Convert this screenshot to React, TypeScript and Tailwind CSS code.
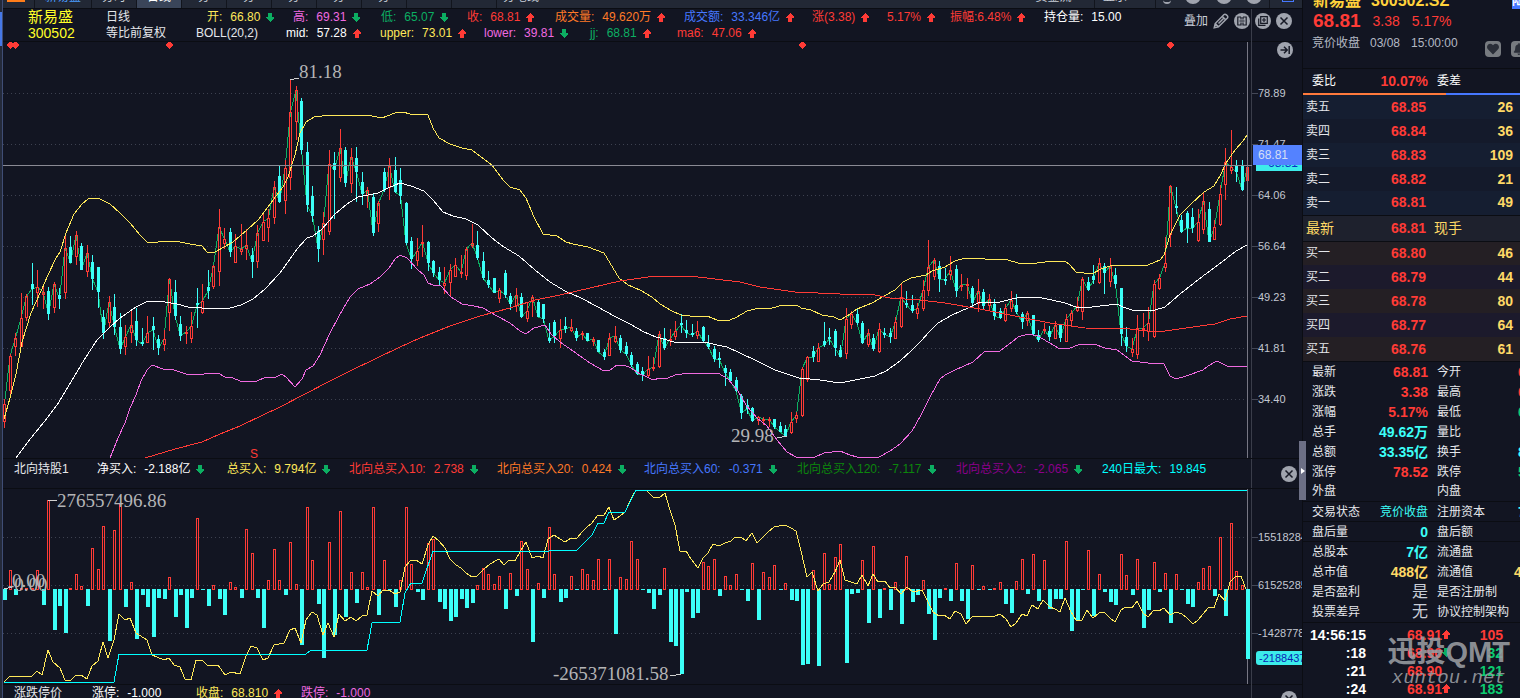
import { ReactNode } from "react"
import { FaHeart, FaBell } from "react-icons/fa"

type Dir = "up" | "down"

interface Quote {
    text: string
    color: string
    width: string
    dir?: Dir
}

interface Stat {
    label: string
    value: string
    color: string
    label2: string
    value2?: string
    color2?: string
    line?: boolean
    plain?: boolean
}

const STEP = 5.5
const START = 4.5
const ZERO = 589

// up flag, high, body top, body bottom, low
const candles = `
1 399 404 422 428|1 354 356 391 394|1 333 338 347 356|1 293 318 347 347|1 294 296 318 321|0 263 284 289 305|1 270 287 293 307|1 284 292 295 309
0 287 291 314 320|1 282 284 308 313|0 288 295 299 309|1 234 248 293 299|0 236 247 263 263|1 231 235 257 265|0 243 246 270 270|1 245 253 272 277
0 255 262 279 290|0 267 267 292 308|0 310 317 333 339|1 296 302 323 328|0 294 307 327 335|0 313 327 349 354|1 325 337 347 355|1 311 325 333 343
0 308 321 340 346|0 328 342 344 346|1 316 333 343 343|0 317 326 330 350|0 335 339 348 355|1 330 339 345 351|1 278 279 313 331|0 280 292 316 320
0 316 324 336 341|1 326 332 334 344|1 312 326 339 343|0 288 303 305 328|1 284 301 313 314|0 270 287 291 299|1 265 266 287 289|1 209 227 272 286
1 228 239 244 249|0 228 232 252 257|1 234 246 263 263|1 224 249 252 255|1 229 245 249 260|0 248 255 262 278|1 225 233 262 268|1 212 222 241 241
1 209 218 228 242|1 181 187 218 224|0 166 176 202 203|1 160 168 201 214|1 80 112 178 190|1 86 90 122 140|0 98 101 150 154|0 142 152 205 212
0 186 196 216 222|0 226 231 249 262|1 212 223 240 255|1 150 164 232 235|0 152 163 170 219|1 129 148 178 182|0 147 150 183 187|1 148 157 184 193
0 147 158 172 202|0 172 182 194 205|1 187 190 196 208|0 193 197 233 236|1 201 203 224 232|0 168 172 190 192|1 158 166 188 200|0 157 170 192 193
0 168 180 196 204|0 202 203 243 245|0 237 241 259 269|1 238 251 261 266|1 225 242 244 257|0 241 242 263 271|0 260 261 273 277|0 267 272 280 285
1 267 283 286 294|1 264 270 283 297|1 258 265 277 277|1 255 272 273 278|1 247 249 276 280|1 224 243 246 248|0 231 245 258 260|0 252 261 278 280
0 271 280 285 288|0 278 278 293 293|1 288 290 299 303|0 270 273 295 298|0 293 296 304 310|1 288 295 306 312|0 293 297 317 318|1 302 311 319 322
1 295 297 302 317|0 300 302 317 317|0 304 304 319 323|0 323 338 341 343|0 320 322 336 343|1 319 330 339 348|0 317 326 329 333|1 319 327 331 332
0 328 331 338 341|1 331 333 335 340|0 333 333 341 341|1 337 339 342 346|0 340 340 352 352|0 349 352 357 360|1 333 338 356 356|1 326 336 342 343
0 335 338 350 353|0 342 346 354 356|0 352 355 365 367|0 362 364 374 375|0 367 371 375 381|1 356 369 376 377|1 357 367 369 371|1 331 334 367 368
0 328 338 348 350|1 329 339 341 346|1 321 331 337 340|0 314 323 325 333|0 320 330 333 338|0 324 333 335 337|1 321 331 336 339|0 326 327 341 343
0 335 343 347 349|0 346 349 359 362|0 352 358 360 368|0 365 368 373 386|0 369 372 381 383|0 377 380 391 392|0 394 396 413 419|0 399 405 409 414
0 407 408 421 422|1 416 417 421 425|1 417 419 421 425|1 417 419 421 427|0 419 419 427 429|0 422 426 432 432|0 425 429 436 436|1 412 422 433 434
1 412 415 419 423|1 367 369 416 417|1 356 357 380 382|0 346 351 357 362|1 343 348 362 362|0 322 341 345 347|0 328 337 339 345|0 329 331 348 356
0 345 350 357 357|1 308 319 354 359|1 311 314 325 329|0 309 314 323 325|0 321 323 343 344|1 329 333 345 347|0 334 338 349 351|1 323 329 352 353
0 328 333 334 338|0 328 333 337 343|1 317 322 339 339|1 284 297 327 328|0 291 303 305 308|0 295 305 311 313|1 303 308 314 319|1 280 290 309 311
1 240 267 291 296|1 258 260 277 280|0 261 266 279 292|0 268 279 280 285|1 256 270 275 280|0 265 269 291 297|1 274 285 287 291|1 278 284 286 299
0 286 288 303 307|1 279 291 304 312|0 289 292 306 309|1 294 299 306 311|0 299 304 316 320|0 308 311 318 319|1 304 308 321 322|1 291 300 309 312
0 294 305 312 314|0 312 314 322 329|1 311 313 321 326|0 315 315 334 336|0 330 335 340 342|1 323 329 331 334|0 326 331 337 341|1 321 325 339 339
0 325 325 338 342|1 314 319 342 342|1 310 313 321 327|1 297 306 311 312|1 277 279 312 320|0 277 282 290 291|0 265 276 280 284|1 258 263 283 284
0 263 266 273 294|1 258 266 282 287|0 268 275 284 288|0 288 288 334 346|0 327 337 346 352|1 338 349 353 357|1 315 328 355 359|1 313 328 330 337
1 307 323 332 341|1 280 284 337 338|1 274 278 289 290|1 237 263 268 272|1 185 186 235 247|0 187 206 208 214|0 215 220 232 233|0 211 213 228 243
0 208 217 228 233|1 209 222 241 242|1 193 201 230 234|0 202 209 242 242|1 220 227 240 240|1 185 194 225 226|1 148 162 185 200|1 130 167 171 174
0 160 165 172 182|0 160 165 190 191|1 163 167 181 193`
    .trim()
    .split(/[|\n]/)
    .map((row) => row.split(" ").map(Number))

const netBuys = [
    -11, 19, -6, 1, 1, 1, 19, -16, 89, -41, -17, -44, 1, 15, 3, -17, 41, 20, 63, -52, 59, 86, -18, 7, -50, -6, -18, -48, -9, -10,
    12, -28, -6, -39, -9, 71, -1, -17, 4, -10, -26, 7, 2, -9, 60, 36, -9, -39, 9, 40, 9, -6, 47, 5, -56, 82, 29, -15, -69, 47,
    -46, 78, -28, 17, -14, 17, 2, 82, -26, 29, -1, -18, 9, 82, 25, -3, -11, 46, 50, -13, -20, -32, -28, -10, -19, -14, 4, 21, 15, 5,
    13, -20, 16, -7, 48, 20, -53, 6, -9, 62, 15, -13, -9, 13, -1, 20, 15, 9, 30, -1, 30, -45, 12, 10, 48, 30, -1, -4, -20, -6,
    21, -53, -57, -85, -3, -29, -24, 27, 23, 30, -7, 13, 4, 15, -1, -12, 26, -31, 17, 12, 24, -1, 6, -11, -12, -76, -75, 19, -77, 36,
    5, 32, 45, -74, -5, -4, 29, -34, 43, -29, 1, -21, 7, -35, 33, -13, -6, 9, -25, -51, -9, 1, -12, 26, -12, -30, 24, -1, 3, -1,
    1, 7, -15, -24, 8, 30, -5, 35, -12, 29, -20, -10, -10, 48, -42, -31, -1, 39, -27, 15, -3, -13, -16, 35, 14, -6, 30, -39, -21, 27,
    -3, 16, -34, 15, -1, -15, -18, 7, 21, 23, -7, 52, -27, 66, 18, 4, -70,
]

const upperBand = "4,419 10,398 16,374 22,342 31,313 41,291 48,275 56,258 60,252 66,233 74,214 82,204 88,199 98,198 110,204 120,213 130,223 140,235 147,242 153,243 163,241 175,241 190,244 202,246 207,252 215,252 224,247 233,242 247,230 258,220 268,207 276,196 283,187 288,177 295,155 300,133 306,122 314,117 330,115 350,115 372,116 382,118 395,113 403,112 410,114 428,115 433,128 439,138 450,144 462,148 472,150 481,157 492,165 503,180 510,187 520,190 526,198 534,217 543,234 557,236 566,242 573,244 588,247 604,253 610,263 619,278 628,285 640,290 652,297 660,304 672,311 681,315 690,316 707,316 717,320 730,320 737,317 747,311 755,309 772,308 783,305 797,305 801,308 811,310 822,315 834,317 840,320 847,316 857,309 872,303 884,296 895,290 903,282 911,278 926,275 932,271 945,267 955,261 965,258 985,259 1008,260 1018,263 1030,264 1045,262 1065,261 1070,265 1076,272 1092,274 1101,269 1113,265 1148,265 1160,260 1164,255 1170,235 1180,215 1190,205 1204,192 1214,186 1221,174 1226,163 1235,150 1243,141 1247,135"
const midBand = "16,458 31,438 48,417 59,402 71,382 84,360 97,340 110,327 120,318 136,307 148,301 165,302 177,304 188,307 202,308 212,309 230,308 241,305 253,299 265,289 280,273 290,259 297,249 307,238 313,236 322,229 335,214 347,204 358,197 378,193 388,188 400,183 411,186 424,191 433,200 443,212 453,216 466,219 478,225 492,238 504,247 519,256 535,270 550,282 565,291 581,298 598,307 614,316 630,324 644,332 656,337 674,342 690,343 705,342 717,345 727,347 740,353 757,361 775,370 799,378 820,380 840,383 860,379 875,376 886,371 900,361 911,351 921,341 929,332 938,323 952,315 968,308 978,303 1000,302 1012,299 1022,297 1037,297 1052,300 1065,303 1076,307 1092,307 1117,304 1123,307 1132,310 1155,310 1165,307 1180,294 1203,276 1218,265 1236,251 1247,245"
const lowerBand = "110,458 118,438 125,423 130,408 136,395 141,381 147,370 152,365 163,369 174,370 186,374 200,375 208,373 218,373 225,377 233,378 240,381 257,381 266,377 274,378 282,374 286,377 295,387 302,379 306,370 313,366 320,355 329,335 339,316 350,297 358,289 370,284 380,277 389,268 395,259 400,255 407,258 418,270 424,275 428,283 433,285 440,285 451,297 462,304 474,306 483,308 497,316 510,323 520,331 526,334 534,328 545,325 551,334 560,342 573,351 590,363 604,371 610,370 617,365 624,365 631,368 640,374 647,377 653,380 660,378 668,378 675,375 690,373 718,373 728,379 738,391 746,405 757,418 767,426 777,440 787,452 796,457 815,457 824,453 840,451 850,455 857,457 879,457 890,451 900,444 912,431 921,415 930,397 940,379 945,375 955,370 973,362 985,351 1000,351 1012,342 1018,337 1028,334 1038,336 1048,342 1060,349 1070,348 1078,345 1094,344 1105,348 1117,350 1132,361 1148,363 1164,364 1170,376 1176,379 1186,376 1203,370 1208,366 1217,361 1227,366 1247,366"
const ma6 = "145,458 175,449 202,442 220,434 240,426 263,415 280,407 305,394 330,381 350,371 375,359 400,347 420,338 450,326 480,316 510,308 535,300 560,295 590,288 620,281 655,276 690,276 715,279 740,282 760,287 795,292 840,294 870,294 890,298 920,300 945,303 980,309 1000,313 1020,317 1050,323 1085,328 1130,329 1148,331 1165,331 1200,326 1215,324 1230,319 1247,316"
const maxLine = "4,682 114,682 119,654 306,654 311,650 367,650 372,623 400,622 405,593 411,583 422,583 433,551 549,551 550,550 577,550 592,535 598,523 604,523 609,512 625,512 636,490 1247,490"
const totalLine = "4,682 10,676 32,676 37,671 42,675 48,650 53,662 60,668 65,680 71,680 76,675 81,675 87,679 92,666 98,661 103,642 108,658 114,640 119,614 125,620 130,618 136,633 147,640 152,655 164,660 169,658 174,665 180,667 185,679 191,680 196,660 202,660 207,665 218,665 225,675 231,672 240,674 246,656 251,646 257,648 263,660 268,658 274,645 284,643 290,630 295,628 301,643 306,620 312,612 317,615 323,635 328,623 334,637 339,614 345,621 351,617 356,621 362,616 367,615 372,591 378,596 383,590 389,590 395,594 400,592 405,567 411,560 416,560 422,564 428,545 433,536 439,541 445,548 450,559 456,565 461,568 466,573 472,577 477,576 483,570 490,564 499,559 504,565 509,560 515,561 521,550 526,542 532,558 538,556 543,558 548,539 554,535 560,539 565,542 571,538 577,538 582,532 587,527 592,523 598,515 604,515 609,507 614,520 620,516 625,512 631,499 636,490 646,490 653,497 659,498 665,493 670,510 675,525 680,551 686,551 691,559 698,568 703,558 708,553 713,544 719,546 725,543 731,541 735,537 741,537 746,541 752,533 757,543 763,537 768,532 774,527 785,525 791,528 796,531 801,551 807,577 812,572 818,591 823,584 829,582 835,572 840,560 845,580 857,584 862,575 868,586 873,574 878,582 885,581 890,588 895,587 901,594 907,587 913,592 922,590 928,602 933,612 939,616 944,615 950,619 955,611 961,614 966,624 972,617 995,616 1000,614 1006,619 1011,627 1016,623 1022,614 1027,616 1032,605 1038,609 1043,600 1050,607 1055,609 1060,612 1065,598 1071,612 1076,620 1082,620 1087,610 1093,618 1099,613 1104,612 1110,618 1115,622 1121,610 1126,607 1132,608 1137,601 1143,613 1148,617 1154,610 1159,611 1164,608 1170,615 1176,612 1182,614 1187,618 1193,624 1198,620 1203,614 1209,607 1214,608 1219,594 1225,601 1230,582 1236,576 1241,576 1247,592"

const topQuotes: Quote[] = [
    { text: "开: 66.80", color: "text-[#ffe95a]", width: "w-[86px]", dir: "down" },
    { text: "高: 69.31", color: "text-[#f06ae0]", width: "w-[88px]", dir: "down" },
    { text: "低: 65.07", color: "text-[#0cae62]", width: "w-[86px]", dir: "down" },
    { text: "收: 68.81", color: "text-[#ff3b36]", width: "w-[88px]", dir: "up" },
    { text: "成交量: 49.620万", color: "text-[#ff7a28]", width: "w-[129px]", dir: "up" },
    { text: "成交额: 33.346亿", color: "text-[#4678ff]", width: "w-[128px]", dir: "up" },
    { text: "涨(3.38)", color: "text-[#ff3b36]", width: "w-[75px]", dir: "up" },
    { text: "5.17%", color: "text-[#ff3b36]", width: "w-[63px]", dir: "up" },
    { text: "振幅:6.48%", color: "text-[#ff3b36]", width: "w-[94px]", dir: "up" },
    { text: "持仓量: 15.00", color: "text-white", width: "w-[90px]" },
]

const bollQuotes: Quote[] = [
    { text: "BOLL(20,2)", color: "text-gray-200", width: "w-[90px]" },
    { text: "mid: 57.28", color: "text-white", width: "w-[94px]", dir: "up" },
    { text: "upper: 73.01", color: "text-[#ffe95a]", width: "w-[104px]", dir: "up" },
    { text: "lower: 39.81", color: "text-[#f06ae0]", width: "w-[106px]", dir: "down" },
    { text: "jj: 68.81", color: "text-[#0cae62]", width: "w-[87px]", dir: "up" },
    { text: "ma6: 47.06", color: "text-[#ff3b36]", width: "w-[90px]", dir: "up" },
]

const northQuotes: Quote[] = [
    { text: "北向持股1", color: "text-gray-200", width: "w-[83px]" },
    { text: "净买入: -2.188亿", color: "text-white", width: "w-[130px]", dir: "down" },
    { text: "总买入: 9.794亿", color: "text-[#ffe95a]", width: "w-[122px]", dir: "down" },
    { text: "北向总买入10: 2.738", color: "text-[#ff3b36]", width: "w-[148px]", dir: "down" },
    { text: "北向总买入20: 0.424", color: "text-[#ff7a28]", width: "w-[147px]", dir: "down" },
    { text: "北向总买入60: -0.371", color: "text-[#4678ff]", width: "w-[153px]", dir: "down" },
    { text: "北向总买入120: -7.117", color: "text-[#0c860c]", width: "w-[159px]", dir: "down" },
    { text: "北向总买入2: -2.065", color: "text-[#8b008b]", width: "w-[146px]", dir: "down" },
    { text: "240日最大: 19.845", color: "text-[#00ffff]", width: "w-[110px]" },
]

const limitQuotes: Quote[] = [
    { text: "涨跌停价", color: "text-gray-200", width: "w-[78px]" },
    { text: "涨停: -1.000", color: "text-white", width: "w-[104px]" },
    { text: "收盘: 68.810", color: "text-[#ffe95a]", width: "w-[105px]", dir: "up" },
    { text: "跌停: -1.000", color: "text-[#f06ae0]", width: "w-[90px]" },
]

const sells = [
    ["卖五", "68.85", "26"],
    ["卖四", "68.84", "36"],
    ["卖三", "68.83", "109"],
    ["卖二", "68.82", "21"],
    ["卖一", "68.81", "49"],
]

const buys = [
    ["买一", "68.80", "46"],
    ["买二", "68.79", "44"],
    ["买三", "68.78", "80"],
    ["买四", "68.77", "64"],
    ["买五", "68.76", "61"],
]

const RED = "text-[#ff3b36]"
const CYAN = "text-[#3cfff8]"
const GREEN = "text-[#0ccc70]"
const GOLD = "text-[#ffd966]"

const stats: Stat[] = [
    { label: "最新", value: "68.81", color: RED, label2: "今开", value2: "66.80", color2: RED },
    { label: "涨跌", value: "3.38", color: RED, label2: "最高", value2: "69.31", color2: RED },
    { label: "涨幅", value: "5.17%", color: RED, label2: "最低", value2: "65.07", color2: GREEN },
    { label: "总手", value: "49.62万", color: CYAN, label2: "量比" },
    { label: "总额", value: "33.35亿", color: CYAN, label2: "换手", value2: "8%", color2: CYAN },
    { label: "涨停", value: "78.52", color: RED, label2: "跌停", value2: "52.34", color2: GREEN },
    { label: "外盘", value: "", color: RED, label2: "内盘" },
    { label: "交易状态", value: "竞价收盘", color: `${CYAN} text-[12px]`, label2: "注册资本", value2: "7亿", color2: CYAN, line: true, plain: true },
    { label: "盘后量", value: "0", color: CYAN, label2: "盘后额", line: true },
    { label: "总股本", value: "7亿", color: CYAN, label2: "流通盘", line: true },
    { label: "总市值", value: "488亿", color: GOLD, label2: "流通值", value2: "433亿", color2: GOLD },
    { label: "是否盈利", value: "是", color: "text-[#c9ced8] text-[16px]", label2: "是否注册制", plain: true },
    { label: "投票差异", value: "无", color: "text-[#c9ced8] text-[16px]", label2: "协议控制架构", plain: true },
]

const ticks: { time: string; price: string; dir?: Dir; qty: string; color: string }[] = [
    { time: "14:56:15", price: "68.91", dir: "up", qty: "105", color: RED },
    { time: ":18", price: "68.90", dir: "down", qty: "32", color: GREEN },
    { time: ":21", price: "68.90", qty: "121", color: GREEN },
    { time: ":24", price: "68.91", dir: "up", qty: "183", color: GREEN },
]

function Arrow({ dir }: { dir: Dir }) {
    return (
        <svg viewBox="0 0 8 9" className="h-[9px] w-2 shrink-0" shapeRendering="crispEdges">
            {dir === "up" ? (
                <path d="M4 0 8 4V5H6V9H2V5H0V4Z" fill="#ff3b36" />
            ) : (
                <path d="M4 9 8 5V4H6V0H2V4H0V5Z" fill="#0cae62" />
            )}
        </svg>
    )
}

function QuoteRow({ items }: { items: Quote[] }) {
    return (
        <div className="flex h-4 items-center whitespace-nowrap text-[12px] leading-4">
            {items.map((q) => {
                const [label, value] = q.text.split(": ")
                return (
                    <div key={q.text} className={`flex shrink-0 items-center gap-1.5 ${q.width} ${q.color}`}>
                        {value ? (
                            <span className="flex gap-2">
                                <span>{label}:</span>
                                <span>{value}</span>
                            </span>
                        ) : (
                            <span>{label}</span>
                        )}
                        {q.dir && <Arrow dir={q.dir} />}
                    </div>
                )
            })}
        </div>
    )
}

function RoundButton({ label, children }: { label: string; children: ReactNode }) {
    return (
        <button type="button" aria-label={label} className="block size-4 shrink-0">
            <svg viewBox="0 0 16 16" className="size-4" fill="none" stroke="#171a26" strokeWidth="1.5">
                <circle cx="8" cy="8" r="8" fill="#a0a4ae" stroke="none" />
                {children}
            </svg>
        </button>
    )
}

function CloseButton() {
    return (
        <RoundButton label="关闭">
            <path d="M4.5 4.5 11.5 11.5 M11.5 4.5 4.5 11.5" />
        </RoundButton>
    )
}

function Axis({ labels, className }: { labels: string[]; className: string }) {
    return (
        <div className={`flex flex-col text-[11px] text-[#c3c7d1] ${className}`}>
            {labels.map((l) => (
                <div key={l} className="flex flex-1 items-center overflow-hidden">
                    <span className="h-px w-1.5 shrink-0 bg-[#444857]" />
                    <span>{l}</span>
                </div>
            ))}
        </div>
    )
}

function Grid({ lines }: { lines: number[] }) {
    return (
        <>
            {lines.map((y) => (
                <line key={y} x1="3" x2="1247" y1={y + 0.5} y2={y + 0.5} stroke="#3d4150" strokeDasharray="1 3" />
            ))}
        </>
    )
}

function PriceChart() {
    const closes = candles.map((c, i) => `${START + i * STEP},${c[0] ? c[2] : c[3]}`).join(" ")

    return (
        <svg viewBox="3 42 1249 416" preserveAspectRatio="none" className="h-full w-full" fill="none" shapeRendering="crispEdges">
            <Grid lines={[93, 144, 195, 246, 297, 348, 399]} />
            <polyline points={closes} stroke="#0cae62" />
            {candles.map(([up, high, top, bottom, low], i) => {
                const x = Math.floor(START + i * STEP)
                if (up) {
                    return (
                        <g key={i} stroke="#ff3b36">
                            <path d={`M${x + 0.5} ${high}V${top} M${x + 0.5} ${bottom}V${low}`} />
                            <rect x={x - 0.5} y={top + 0.5} width="2" height={Math.max(bottom - top - 1, 1)} />
                        </g>
                    )
                }
                return (
                    <g key={i} fill="#3cfff8">
                        <rect x={x} y={high} width="1" height={low - high} />
                        <rect x={x - 1} y={top} width="3" height={Math.max(bottom - top, 2)} />
                    </g>
                )
            })}
            <polyline points={upperBand} stroke="#ffe95a" />
            <polyline points={midBand} stroke="#ffffff" />
            <polyline points={lowerBand} stroke="#f06ae0" />
            <polyline points={ma6} stroke="#ff3b36" />
            <line x1="3" x2="1252" y1="165.5" y2="165.5" stroke="#8a8a94" />
            <line x1="1247.5" x2="1247.5" y1="42" y2="458" stroke="#777784" />
            <path d="M290.5 80L294 79L299 78 M777 437L782 437L787 436" stroke="#d0d0d0" />
            {[10, 15, 169, 802, 1170].map((x) => (
                <path key={x} d={`M${x} 42L${x + 4} 46L${x} 50L${x - 4} 46Z`} transform="translate(0 -1)" fill="#ff3b36" />
            ))}
        </svg>
    )
}

function NorthChart() {
    return (
        <svg viewBox="3 489 1249 195" preserveAspectRatio="none" className="h-full w-full" fill="none" shapeRendering="crispEdges">
            <Grid lines={[537, 585, 633]} />
            {netBuys.map((v, i) => {
                const x = Math.floor(START + i * STEP)
                return v > 0 ? (
                    <rect key={i} x={x - 0.5} y={ZERO - v + 0.5} width="2" height={v} stroke="#ff3b36" />
                ) : (
                    <rect key={i} x={x - 1} y={ZERO} width="4" height={-v} fill="#3cfff8" />
                )
            })}
            <polyline points={totalLine} stroke="#ffe95a" />
            <polyline points={maxLine} stroke="#00ffff" />
            <line x1="1247.5" x2="1247.5" y1="489" y2="684" stroke="#777784" />
            <rect x="1246" y={ZERO} width="4" height="70" fill="#3cfff8" />
            <path d="M48 500.5H57 M670 676L676 675L681 674 M4 589L12 587" stroke="#d0d0d0" />
        </svg>
    )
}

function TabBar() {
    const tab = "flex h-full shrink-0 items-end justify-center border-r border-[#12151d] pb-[5px]"
    return (
        <div className="flex h-[9px] overflow-hidden border-b border-[#0b0d13] bg-[#222835] text-[12px] leading-[12px] text-[#c9ced8]">
            <button type="button" aria-label="菜单" className="flex h-full w-8 shrink-0 items-start border-r border-[#12151d] pl-1">
                <span className="h-0.5 w-[18px] bg-[#ff7d1a]" />
            </button>
            <button type="button" className={`${tab} w-[57px] text-[#4b9dff]`}>新易盛</button>
            <button type="button" className={`${tab} w-[45px]`}>分时</button>
            <button type="button" className={`${tab} w-[45px] bg-[#3a4559] text-white`}>日线</button>
            {[1, 2, 3, 4, 5].map((n) => (
                <button key={n} type="button" className={`${tab} w-[45px]`}>分</button>
            ))}
            <span className={`${tab} w-[45px]`} />
            <span className={`${tab} w-[45px]`} />
            <button type="button" className="flex shrink-0 items-end pb-[5px] pl-1.5">分笔线</button>
            <div className="flex-1" />
            <button type="button" className={`${tab} w-[62px] pr-5`}>资金流</button>
            <button type="button" className={`${tab} w-[61px] pr-5`}>显示</button>
            <div className="flex w-[114px] shrink-0 items-end justify-around border-r border-[#12151d] pb-1 text-[#a0a4ae]">
                <span className="h-1 w-2 rounded-b-full border-b-2 border-current" />
                <span className="h-2 w-4 rounded-b-full bg-current" />
                <span className="h-2 w-4 rounded-b-full bg-current" />
                <span className="h-2 w-4 rounded-b-full bg-current" />
            </div>
            <div className="w-8 shrink-0 pl-3">
                <span className="block h-0.5 w-3 border-x border-b border-[#4678ff]" />
            </div>
        </div>
    )
}

function BookRows({ rows, odd, even }: { rows: string[][]; odd: string; even: string }) {
    return (
        <>
            {rows.map(([name, price, qty], i) => (
                <tr key={name} className={`h-6 ${i % 2 ? even : odd}`}>
                    <td className="pl-[3px] text-[12px] text-gray-200">{name}</td>
                    <td className="w-[80px] text-right font-bold text-[#ff3b36]">{price}</td>
                    <td className="w-[94px] pr-[7px] text-right font-bold text-[#ffd966]">{qty}</td>
                </tr>
            ))}
        </>
    )
}

function QuotePanel() {
    return (
        <aside className="relative flex w-[217px] shrink-0 flex-col overflow-hidden whitespace-nowrap text-[14px] text-gray-200">
            <div className="flex h-[9px] items-end gap-2.5 overflow-hidden pl-2.5 text-[16px] font-bold leading-4 text-[#ffd23c]">
                <span>新易盛</span>
                <span>300502.SZ</span>
                <span className="ml-auto w-2 shrink-0 overflow-hidden bg-[#4678ff] text-[12px] text-white">陆</span>
            </div>
            <div className="flex h-6 items-center gap-3 pl-2.5 text-[#ff3b36]">
                <span className="text-[19px] font-bold">68.81</span>
                <span>3.38</span>
                <span>5.17%</span>
            </div>
            <div className="flex h-9 border-b border-[#0b0d13] pl-[9px] text-[12px] text-[#b4b9c4]">
                <div className="flex h-5 items-center">
                    <span className="w-[58px]">竞价收盘</span>
                    <span className="w-[41px]">03/08</span>
                    <span>15:00:00</span>
                </div>
                <div className="ml-auto mt-2 flex shrink-0 gap-2.5 overflow-hidden">
                    <button type="button" aria-label="自选" className="flex size-4 items-center justify-center rounded-sm bg-[#777b80] text-[#2a2e38]">
                        <FaHeart className="size-3" />
                    </button>
                    <button type="button" aria-label="预警" className="-mr-[7px] flex size-4 items-center justify-center rounded-sm bg-[#777b80] text-[#2a2e38]">
                        <FaBell className="size-3" />
                    </button>
                </div>
            </div>
            <div className="flex h-6 items-center pl-[9px]">
                <span className="w-9 text-[12px] text-white">委比</span>
                <span className="w-20 text-right font-bold text-[#ff3b36]">10.07%</span>
                <span className="pl-[9px] text-[12px] text-white">委差</span>
            </div>
            <div className="flex h-0.5">
                <span className="w-[143px] bg-[#ff7a3c]" />
                <span className="flex-1 bg-[#4678ff]" />
            </div>
            <table className="w-full border-collapse">
                <tbody>
                    <BookRows rows={sells} odd="bg-[#151e31]" even="bg-[#141a2b]" />
                    <tr className="h-[26px] border-y border-[#0b0d13] bg-[#1e212d] text-[#ffd966]">
                        <td className="pl-[3px]">最新</td>
                        <td className="text-right font-bold text-[#ff3b36]">68.81</td>
                        <td className="pl-2">现手</td>
                    </tr>
                    <BookRows rows={buys} odd="bg-[#241f24]" even="bg-[#1c1a2c]" />
                </tbody>
            </table>
            <table className="w-[260px] table-fixed border-collapse border-t border-[#0b0d13]">
                <tbody>
                    {stats.map((s) => (
                        <tr key={s.label} className={`h-5 ${s.line ? "border-t border-[#0b0d13]" : ""}`}>
                            <td className="w-[61px] pl-[9px] text-[12px] leading-[18px]">{s.label}</td>
                            <td className={`w-16 text-right leading-[18px] ${s.color} ${s.plain ? "" : "font-bold"}`}>{s.value}</td>
                            <td className="w-[86px] pl-[9px] text-[12px] leading-[18px]">{s.label2}</td>
                            <td className={`font-bold leading-[18px] ${s.color2 ?? ""} ${s.color2 === GOLD ? "" : "pl-1"}`}>{s.value2}</td>
                        </tr>
                    ))}
                </tbody>
            </table>
            <div className="border-t border-[#0b0d13] pt-[3px]">
                <table className="w-full table-fixed">
                    <tbody className="font-bold">
                        {ticks.map((t, i) => (
                            <tr key={i} className="h-[18px] leading-[18px]">
                                <td className="w-[63px] text-right text-white">{t.time}</td>
                                <td className="w-[85px] text-[#ff3b36]">
                                    <div className="ml-auto flex w-[44px] items-center">
                                        {t.price}
                                        {t.dir && <Arrow dir={t.dir} />}
                                    </div>
                                </td>
                                <td className={`pr-[17px] text-right ${t.color}`}>{t.qty}</td>
                            </tr>
                        ))}
                    </tbody>
                </table>
            </div>
            <div className="pointer-events-none absolute bottom-0 right-2.5 flex flex-col items-center text-[#9a9da3]/90">
                <span className="text-[29px] font-bold leading-7">迅投QMT</span>
                <span className="pb-2 font-['Liberation_Mono',monospace] text-[19px] italic leading-6">xuntou.net</span>
            </div>
        </aside>
    )
}

export default function App() {
    const note = "absolute font-['Liberation_Serif',serif] text-[19px] leading-5 text-[#b4b4b6]"

    return (
        <div className="flex h-screen overflow-hidden bg-[#121522] font-['Liberation_Sans','Noto_Sans_CJK_SC',sans-serif]">
            <div className="flex w-[3px] shrink-0 flex-col border-r border-[#3f4d75] bg-[#242a3a]">
                <span className="mt-3 h-[34px] bg-[#4678e8]" />
            </div>

            <main className="flex min-w-0 flex-1 flex-col">
                <TabBar />
                <div className="relative flex min-h-0 flex-1 flex-col">
                    <span className="absolute inset-y-0 right-[50px] w-px bg-[#3a3d4a]" />

                    <header className="flex h-[33px] shrink-0 border-b border-[#0b0d13]">
                        <div className="w-[103px] shrink-0 pl-[25px] text-[#ffff28]">
                            <div className="text-[15px] leading-4">新易盛</div>
                            <div className="text-[14px] leading-4">300502</div>
                        </div>
                        <div className="w-[90px] shrink-0 text-[12px] leading-4 text-gray-200">
                            <div>日线</div>
                            <div>等比前复权</div>
                        </div>
                        <div className="min-w-0 flex-1 overflow-hidden">
                            <div className="pl-[11px]">
                                <QuoteRow items={topQuotes} />
                            </div>
                            <QuoteRow items={bollQuotes} />
                        </div>
                        <div className="flex h-6 shrink-0 items-center gap-[5px] pr-2.5">
                            <button type="button" className="text-[12px] leading-4 text-[#c9ced8]">叠加</button>
                            <button type="button" aria-label="画线" className="block size-4">
                                <svg viewBox="0 0 16 16" className="size-4" fill="none" stroke="#a0a4ae" strokeWidth="1.5">
                                    <path d="M1.2 14.8 2.2 10.6 10.8 1.8Q12 .7 13.4 1.9L14.3 2.8Q15.3 4 14.2 5.2L5.5 13.8Z M2.2 10.6 5.5 13.8 M9.2 3.4 12.6 6.8 M5.5 10.5 11 5" />
                                </svg>
                            </button>
                            <RoundButton label="区间统计">
                                <path d="M7 4H3.8V12H7V9.5 M7 4V6.5 M9 4H12.2V12H9V9.5 M9 4V6.5 M5.5 8H10.5" strokeWidth="1.2" />
                            </RoundButton>
                            <RoundButton label="添加副图">
                                <path d="M5.7 3.7H12.3V10.3H5.7Z M3.7 5.5V12.3H10.5 M9 5V9 M7 7H11" strokeWidth="1.2" />
                            </RoundButton>
                            <CloseButton />
                        </div>
                    </header>

                    <section className="relative flex h-[416px] shrink-0">
                        <div className="relative min-w-0 flex-1">
                            <PriceChart />
                            <span className={`${note} left-[296px] top-[20px]`}>81.18</span>
                            <span className={`${note} left-[728px] top-[384px]`}>29.98</span>
                            <span className="absolute left-[247px] top-[404px] text-[12px] leading-4 text-[#ff3b36]">S</span>
                        </div>
                        <Axis className="w-[50px] shrink-0 pb-[33px] pt-[26px]" labels={["78.89", "71.47", "64.06", "56.64", "49.23", "41.81", "34.40"]} />
                        <span className="absolute right-0 top-[113px] h-4 w-[46px] bg-[#3cecea] pl-3 text-[12px] leading-4 text-[#0a32c8]">68.81</span>
                        <span className="absolute right-0 top-[103px] h-5 w-[49px] bg-[#5482ff] pl-[5px] text-[12px] leading-5 text-[#d5def5]">68.81</span>
                        <div className="absolute right-[9px] top-0">
                            <RoundButton label="移到最新">
                                <path d="M3.5 8H10 M7 4.8 10.2 8 7 11.2 M12.2 4V12" />
                            </RoundButton>
                        </div>
                    </section>

                    <div className="relative flex h-[31px] shrink-0 justify-between border-y border-[#0b0d13] pl-[11px]">
                        <div className="min-w-0 flex-1 pt-0.5">
                            <QuoteRow items={northQuotes} />
                        </div>
                        <div className="pr-[5px] pt-[7px]">
                            <CloseButton />
                        </div>
                    </div>

                    <section className="relative flex h-[195px] shrink-0">
                        <div className="relative min-w-0 flex-1">
                            <NorthChart />
                            <span className={`${note} left-[54px] top-[2px]`}>276557496.86</span>
                            <span className={`${note} left-[9px] top-[82px]`}>0.00</span>
                            <span className={`${note} left-[5px] top-[86px]`}>-0.00</span>
                            <span className={`${note} left-[550px] top-[175px]`}>-265371081.58</span>
                        </div>
                        <Axis className="w-[50px] shrink-0 pb-[27px] pt-6" labels={["15518284", "61525285", "-14287781"]} />
                        <span className="absolute right-0 top-[162px] h-3.5 w-[46px] overflow-hidden rounded-l-[3px] bg-[#3cecea] pl-[3px] text-[11px] leading-[14px] text-[#0a1eb4]">-21884371</span>
                    </section>

                    <div className="flex min-h-0 flex-1 justify-between overflow-hidden border-t border-[#0b0d13] pl-[11px]">
                        <QuoteRow items={limitQuotes} />
                        <div className="pr-[5px] pt-1.5">
                            <CloseButton />
                        </div>
                    </div>
                </div>
            </main>

            <div className="relative w-px shrink-0 bg-[#0b0d13]">
                <button type="button" aria-label="收起" className="absolute -left-[3px] top-[441px] z-10 flex h-[59px] w-[7px] items-center justify-center bg-[#6c6f85]">
                    <svg viewBox="0 0 4 6" className="h-1.5 w-1" fill="#ffffff">
                        <path d="M0 0 4 3 0 6Z" />
                    </svg>
                </button>
            </div>
            <QuotePanel />
        </div>
    )
}
